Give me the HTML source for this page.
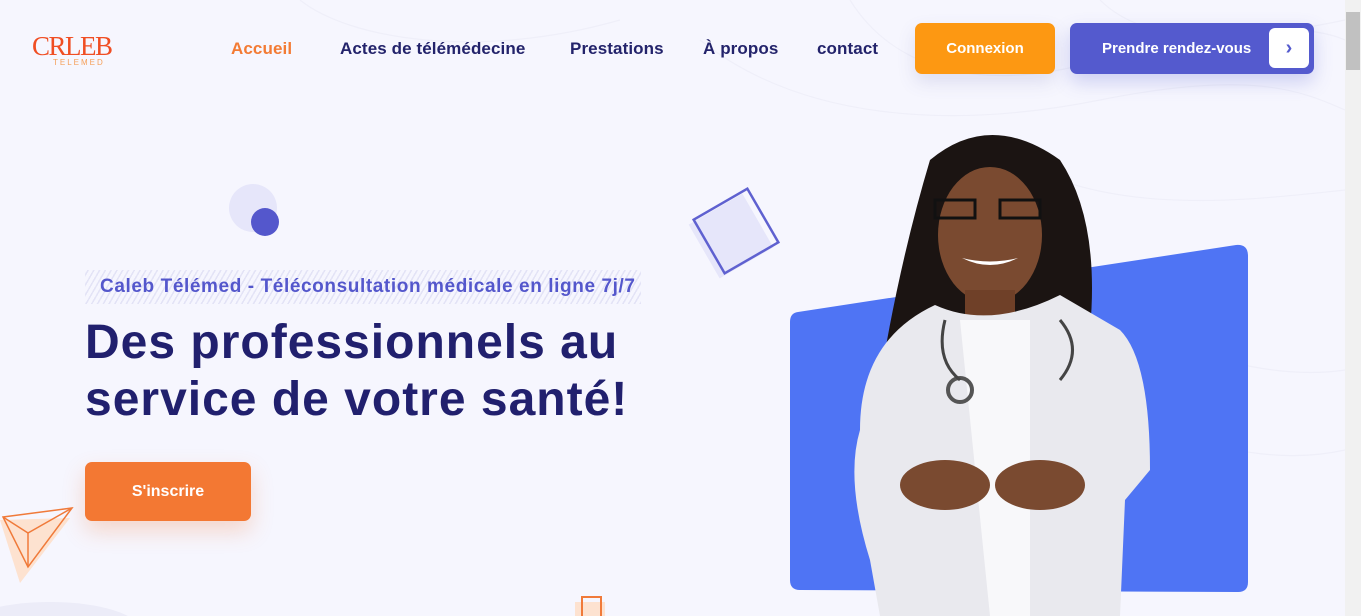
<!DOCTYPE html>
<html><head><meta charset="utf-8"><style>
*{margin:0;padding:0;box-sizing:border-box}
html,body{width:1361px;height:616px;overflow:hidden}
body{background:#f6f6fe;font-family:"Liberation Sans",sans-serif;position:relative}
.a{position:absolute}
nav a{position:absolute;top:39px;font-size:17px;color:#23236b;text-decoration:none;font-weight:bold;letter-spacing:.1px}
.btn{position:absolute;border-radius:7px;color:#fff;font-weight:bold;font-size:15px;display:flex;align-items:center}
</style></head><body>
<svg class="a" style="left:0;top:0" width="1361" height="616">
<g fill="none" stroke="#efeff9" stroke-width="1.2">
<path d="M850 0 C900 80 1000 90 1100 60 S1300 20 1345 40"/>
<path d="M700 40 C800 120 950 130 1100 100 S1300 90 1345 110"/>
<path d="M1100 0 C1150 50 1250 40 1345 20"/>
<path d="M1000 150 C1100 220 1250 200 1345 190"/>
<path d="M1100 300 C1180 360 1280 380 1345 370"/>
<path d="M1150 420 C1230 460 1300 460 1345 450"/>
<path d="M300 0 C350 40 480 60 620 20"/>
</g>
<circle cx="253" cy="208" r="24" fill="#e6e6fa"/>
<circle cx="265" cy="222" r="14" fill="#5457cc"/>
<rect x="700" y="205" width="62" height="62" fill="#e6e6fa" transform="rotate(-30 731 236)"/>
<rect x="705" y="200" width="62" height="62" fill="none" stroke="#5f61d0" stroke-width="2.5" transform="rotate(-30 736 231)"/>
<polygon points="0,520 70,518 20,583" fill="#fde2d0"/>
<polygon points="3,517 72,508 28,567" fill="none" stroke="#f07a3a" stroke-width="1.5"/>
<line x1="3" y1="517" x2="28" y2="533" stroke="#f07a3a" stroke-width="1.5"/>
<line x1="72" y1="508" x2="28" y2="533" stroke="#f07a3a" stroke-width="1.5"/>
<line x1="28" y1="533" x2="28" y2="567" stroke="#f07a3a" stroke-width="1.5"/>
<rect x="575" y="602" width="30" height="14" fill="#fde2d0"/>
<rect x="582" y="597" width="19" height="25" fill="none" stroke="#f07a3a" stroke-width="2"/>
<ellipse cx="50" cy="630" rx="90" ry="28" fill="#ececf8"/>
<path d="M798 312 L1236 245 Q1248 244 1248 256 L1248 582 Q1248 592 1238 592 L800 590 Q790 590 790 580 L790 322 Q790 313 798 312Z" fill="#4f74f4"/>
<path d="M930 160 Q990 110 1060 160 Q1100 220 1090 330 L1095 380 L1040 330 L940 330 L880 380 Q900 260 930 160Z" fill="#1b1412"/>
<ellipse cx="990" cy="235" rx="52" ry="68" fill="#7a4a30"/>
<rect x="965" y="290" width="50" height="40" fill="#6f4028"/>
<path d="M935 305 Q990 330 1060 295 L1120 330 Q1150 360 1150 470 L1125 500 L1120 616 L880 616 L870 560 Q845 480 860 430 Q860 340 935 305Z" fill="#e9e9ee"/>
<path d="M960 320 L990 616 L1030 616 L1030 320Z" fill="#f8f8fa"/>
<path d="M935 200 h40 v18 h-40z M1000 200 h40 v18 h-40z" fill="none" stroke="#111" stroke-width="3"/>
<path d="M962 258 Q990 272 1018 258 Q990 265 962 258Z" fill="#fff"/>
<ellipse cx="960" cy="390" rx="12" ry="12" fill="none" stroke="#555" stroke-width="4"/>
<path d="M945 320 Q935 360 960 380 M1060 320 Q1085 350 1060 380" fill="none" stroke="#444" stroke-width="3"/>
<ellipse cx="945" cy="485" rx="45" ry="25" fill="#7a4a30"/>
<ellipse cx="1040" cy="485" rx="45" ry="25" fill="#7a4a30"/>
</svg>
<div class="a" style="left:32px;top:31px;font-size:27px;color:#f04e23;letter-spacing:-1.5px;font-family:'Liberation Serif',serif">CRLEB</div>
<div class="a" style="left:53px;top:58px;font-size:8px;color:#f5a05a;letter-spacing:2px">TELEMED</div>
<nav>
<a style="left:231px;color:#f37b34">Accueil</a>
<a style="left:340px">Actes de télémédecine</a>
<a style="left:570px">Prestations</a>
<a style="left:703px">À propos</a>
<a style="left:817px">contact</a>
</nav>
<div class="btn" style="left:915px;top:23px;width:140px;height:51px;background:#fd9812;justify-content:center;box-shadow:0 8px 18px rgba(80,80,160,.15)">Connexion</div>
<div class="btn" style="left:1070px;top:23px;width:244px;height:51px;background:#545ace;padding-left:32px;box-shadow:0 8px 18px rgba(84,90,206,.25)">Prendre rendez-vous
<div class="a" style="right:5px;top:5px;width:40px;height:40px;background:#fff;border-radius:6px;color:#545ace;font-size:20px;display:flex;align-items:center;justify-content:center">›</div></div>
<div class="a" style="left:1345px;top:0;width:16px;height:616px;background:#f1f1f1"></div>
<div class="a" style="left:1346px;top:12px;width:14px;height:58px;background:#c1c1c1"></div>
<div class="a" style="left:85px;top:270px;width:556px;height:34px;background:repeating-linear-gradient(-60deg,#e3e3f6 0 1.5px,transparent 1.5px 5px)"></div>
<div class="a" style="left:100px;top:276px;font-size:19px;font-weight:bold;color:#5457cc;letter-spacing:.6px">Caleb Télémed - Téléconsultation médicale en ligne 7j/7</div>
<div class="a" style="left:85px;top:314px;font-size:48px;line-height:57px;font-weight:bold;color:#21206e;letter-spacing:1px;white-space:nowrap">Des professionnels au<br>service de votre santé!</div>
<div class="btn" style="left:85px;top:462px;width:166px;height:59px;background:#f37833;justify-content:center;font-size:16px;box-shadow:0 10px 22px rgba(243,120,51,.25)">S'inscrire</div>
</body></html>
